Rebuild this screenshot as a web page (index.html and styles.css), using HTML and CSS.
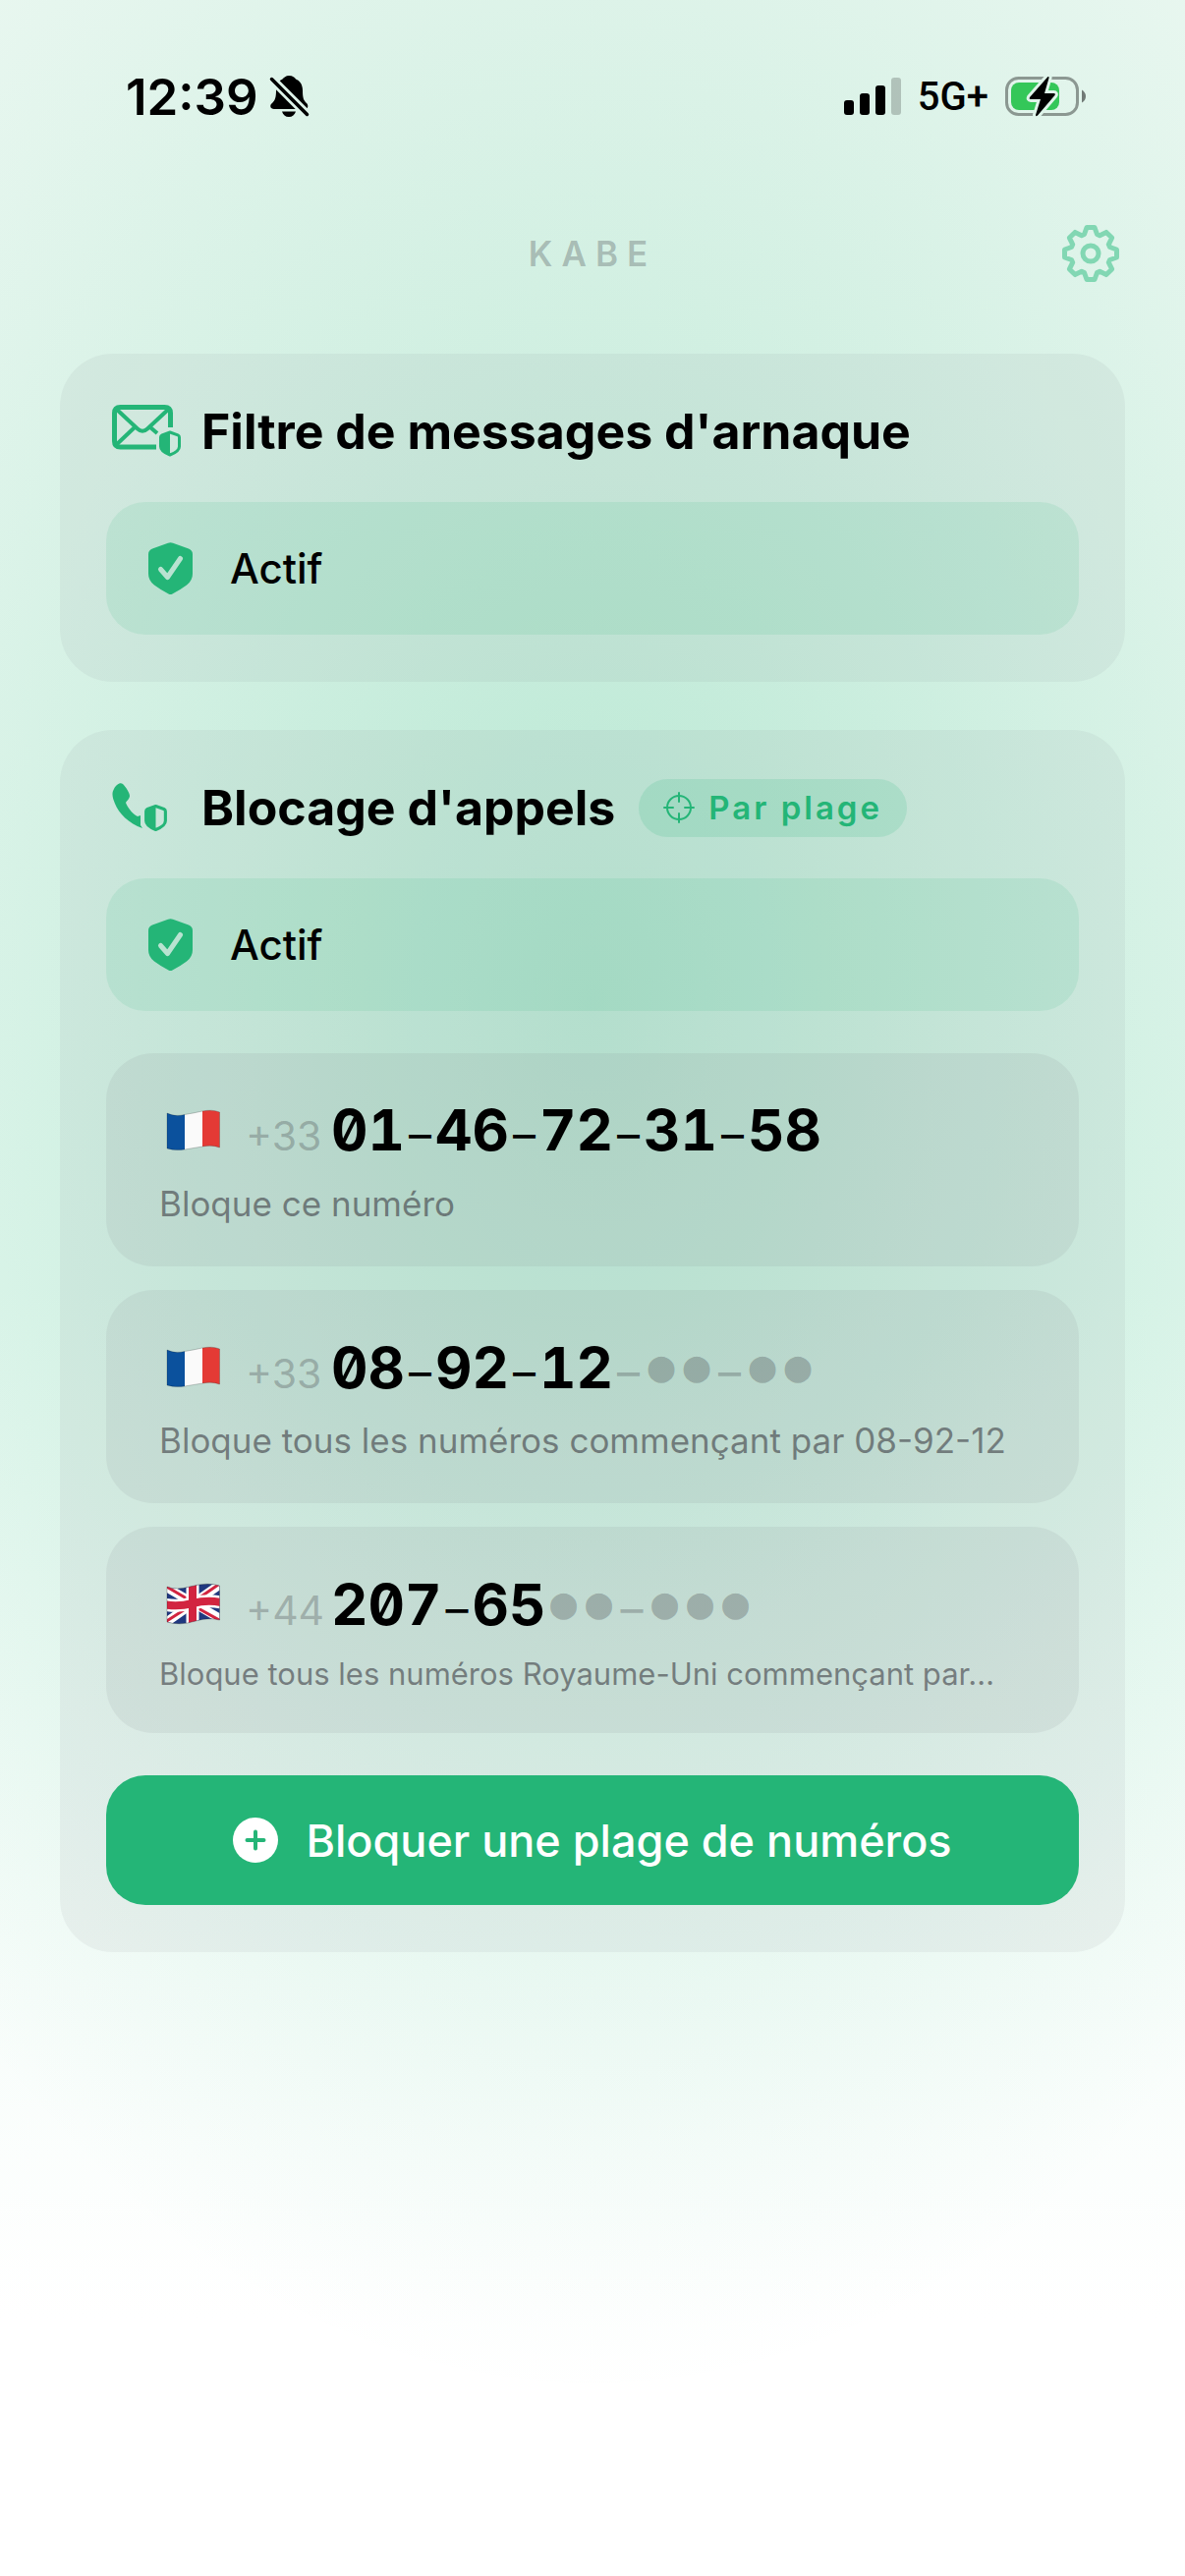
FILE: index.html
```html
<!DOCTYPE html>
<html lang="fr">
<head>
<meta charset="utf-8">
<meta name="viewport" content="width=device-width, initial-scale=1">
<title>KABE</title>
<link rel="stylesheet" href="styles.css">
</head>
<body>
<svg class="defs" width="0" height="0" aria-hidden="true">
  <symbol id="shield-check" viewBox="0 0 45 53">
    <path fill="currentColor" d="M20 .8q2.500-1.300 5 0L41 6.500Q45 8 45 12V32Q45 39 39 43.500Q33 48 24.500 52.500Q22.500 53.500 20.500 52.500Q12 48 6 43.500Q0 39 0 32V12Q0 8 4 6.500Z"/>
    <path class="cut" d="M12.500 27.500L19.500 35.500L32.500 16.500" fill="none" stroke-width="5" stroke-linecap="round" stroke-linejoin="round"/>
  </symbol>
  <symbol id="half-shield" viewBox="0 0 22 26">
    <path fill="none" stroke="currentColor" stroke-width="3" stroke-linejoin="round" d="M11 1.500L19 4.300Q20.500 5 20.500 6.500V16Q20.500 21 11 24.500Q1.500 21 1.500 16V6.500Q1.500 5 3 4.300Z"/>
    <path fill="currentColor" d="M11 1L2 4.500V17Q3 21 11 25Z"/>
  </symbol>
  <symbol id="flag-fr" viewBox="0 0 60 44">
    <path fill="#0b519d" d="M5 5Q13 9 23 6.500V42Q13 43.500 5 41Z"/>
    <path fill="#fafafa" d="M23 6.500Q32 5 41 3V39Q32 40.500 23 42Z"/>
    <path fill="#e43a35" d="M41 3Q51 1 58.500 4V40Q51 37 41 39Z"/>
    <path fill="none" stroke="#000" stroke-opacity=".2" d="M5 5Q13 9 23 6.500Q32 5 41 3Q51 1 58.500 4V40Q51 37 41 39Q32 40.500 23 42Q13 43.500 5 41Z"/>
  </symbol>
  <symbol id="flag-gb" viewBox="0 0 60 44">
    <clipPath id="gb-wave"><path d="M5 5Q14 9 28 5Q46 0 58.500 4V39Q48 36 34 40Q18 45 5 41Z"/></clipPath>
    <g clip-path="url(#gb-wave)">
      <path fill="#20387f" d="M0 0H60V44H0Z"/>
      <path stroke="#fff" stroke-width="9" d="M3 5L60 38M3 42L60 2"/>
      <path stroke="#d22440" stroke-width="3" d="M3 4L30 20M33 25L60 40M3 41L28 25M34 19L60 1"/>
      <path stroke="#fff" stroke-width="13" fill="none" d="M31 0V44M2 23Q15 26 31 22Q46 18 60 21"/>
      <path stroke="#d22440" stroke-width="8" fill="none" d="M31 0V44M2 23Q15 26 31 22Q46 18 60 21"/>
    </g>
    <path fill="none" stroke="#000" stroke-opacity=".25" d="M5 5Q14 9 28 5Q46 0 58.500 4V39Q48 36 34 40Q18 45 5 41Z"/>
  </symbol>
</svg>

<div class="statusbar">
  <div class="status-left">
    <span class="time">12:39</span>
    <svg width="42" height="44" viewBox="0 0 42 44" aria-label="Silencieux">
      <path d="M20 1C24 1 26 3 27 4.500C31 6 34 10 34 16C34 24 35 26 38 29C40 31 40 35 36 35H5C1 35 0 31 3 29C6 26 7 23 7 16C7 10 10 6 13.500 4.500C15 3 17 1 20 1ZM13 37.500H27C26 41 23.500 43 20 43S14 41 13 37.500Z"/>
      <path class="cut" d="M2 4L38 40" stroke-width="9"/>
      <path d="M2.500 4.500L38.500 40.500" stroke="#000" stroke-width="3.500" stroke-linecap="round"/>
    </svg>
  </div>
  <div class="status-right">
    <svg width="58" height="38" viewBox="0 0 58 38" aria-hidden="true">
      <rect y="23" width="10" height="15" rx="3"/><rect x="16" y="16" width="10" height="22" rx="3"/>
      <rect x="32" y="8" width="10" height="30" rx="3"/><rect x="48" width="10" height="38" rx="3" opacity=".2"/>
    </svg>
    <span class="network">5G+</span>
    <svg width="82" height="42" viewBox="0 0 82 42" aria-hidden="true">
      <rect x="1.500" y="2.500" width="72" height="37" rx="12" fill="none" stroke="#000" stroke-opacity=".38" stroke-width="3"/>
      <path d="M78 14.500Q82 17 82 21T78 27.500Z" fill-opacity=".5"/>
      <rect x="6" y="7" width="49" height="28" rx="8" fill="#34c759"/>
      <path class="cut" d="M43.500 1L25 22Q24 24 26 24H36L31 40Q31 42 33 40.500L50.500 20Q51.500 18 49.500 18H40L44.500 2.500Q45 .5 43.500 1Z" stroke-width="6" stroke-linejoin="round"/>
      <path d="M43.500 1L25 22Q24 24 26 24H36L31 40Q31 42 33 40.500L50.500 20Q51.500 18 49.500 18H40L44.500 2.500Q45 .5 43.500 1Z"/>
    </svg>
  </div>
</div>

<header class="topbar">
  <h1 class="brand">KABE</h1>
  <button class="settings" type="button" aria-label="Réglages">
    <svg width="58" height="58" viewBox="-29 -29 58 58" fill="none" stroke="currentColor" stroke-width="5" stroke-linejoin="round">
      <circle r="8"/>
      <path d="M-4-26.500H4L6.500-19.500L9.200-18.300L15.900-21.600L21.600-15.900L18.300-9.200L19.500-6.500L26.500-4V4L19.500 6.500L18.300 9.200L21.600 15.900L15.900 21.600L9.200 18.300L6.500 19.500L4 26.500H-4L-6.500 19.500L-9.200 18.300L-15.900 21.600L-21.600 15.900L-18.300 9.200L-19.500 6.500L-26.500 4V-4L-19.500-6.500L-18.300-9.200L-21.600-15.900L-15.900-21.600L-9.200-18.300L-6.500-19.500Z"/>
    </svg>
  </button>
</header>

<main class="content">
  <section class="card">
    <div class="card-head">
      <span class="card-icon">
        <svg width="72" height="54" viewBox="0 0 72 54" fill="none" stroke="currentColor" stroke-width="5" aria-hidden="true">
          <path d="M45 43H8.500Q2.500 43 2.500 37V8.500Q2.500 2.500 8.500 2.500H53.500Q59.500 2.500 59.500 8.500V23"/>
          <path d="M4 4L26 24.500Q31 29 36 24.500L58 4M4 41L23 23M39 23L46 29" stroke-width="4"/>
          <use href="#half-shield" x="48" y="26" width="22" height="27" stroke="none"/>
        </svg>
      </span>
      <h2>Filtre de messages d'arnaque</h2>
    </div>
    <div class="state">
      <svg width="45" height="53" aria-hidden="true"><use href="#shield-check"/></svg>
      <span>Actif</span>
    </div>
  </section>

  <section class="card">
    <div class="card-head">
      <span class="card-icon">
        <svg width="58" height="52" viewBox="0 0 58 52" aria-hidden="true">
          <path fill="currentColor" d="M2 7C4 3 8 0 11 2C14 5 18 11 18 14C18 17 15 19 14 21C16 27 23 34 26 35L29 34V44L31 47C17 42 7 32 3 22C1 17-1 12 2 7Z"/>
          <use href="#half-shield" x="33" y="23" width="23" height="27"/>
        </svg>
      </span>
      <h2>Blocage d'appels</h2>
      <span class="badge">
        <svg width="32" height="32" viewBox="0 0 32 32" fill="none" stroke="currentColor" stroke-width="2" stroke-linecap="round" aria-hidden="true">
          <circle cx="16" cy="16" r="12"/><path d="M16 1V10M16 22V31M1 16H10M22 16H31"/>
        </svg>
        Par plage
      </span>
    </div>
    <div class="state">
      <svg width="45" height="53" aria-hidden="true"><use href="#shield-check"/></svg>
      <span>Actif</span>
    </div>

    <ul class="numbers">
      <li class="number">
        <div class="number-line">
          <svg width="60" height="44" aria-label="France"><use href="#flag-fr"/></svg>
          <span class="prefix">+33</span>
          <span class="digits">01<i>–</i>46<i>–</i>72<i>–</i>31<i>–</i>58</span>
        </div>
        <p class="caption">Bloque ce numéro</p>
      </li>
      <li class="number">
        <div class="number-line">
          <svg width="60" height="44" aria-label="France"><use href="#flag-fr"/></svg>
          <span class="prefix">+33</span>
          <span class="digits">08<i>–</i>92<i>–</i>12<span class="masked"><i>–</i><b>●</b><b>●</b><i>–</i><b>●</b><b>●</b></span></span>
        </div>
        <p class="caption">Bloque tous les numéros commençant par 08-92-12</p>
      </li>
      <li class="number">
        <div class="number-line">
          <svg width="60" height="44" aria-label="Royaume-Uni"><use href="#flag-gb"/></svg>
          <span class="prefix">+44</span>
          <span class="digits">207<i>–</i>65<span class="masked"><b>●</b><b>●</b><i>–</i><b>●</b><b>●</b><b>●</b></span></span>
        </div>
        <p class="caption caption-small">Bloque tous les numéros Royaume-Uni commençant par…</p>
      </li>
    </ul>

    <button class="primary" type="button">
      <svg width="46" height="46" viewBox="0 0 46 46" aria-hidden="true">
        <circle cx="23" cy="23" r="23" fill="#fff"/>
        <path d="M23 14.500V31.500M14.500 23H31.500" stroke="#24b577" stroke-width="4" stroke-linecap="round"/>
      </svg>
      Bloquer une plage de numéros
    </button>
  </section>
</main>
</body>
</html>
```
FILE: styles.css
```css
:root {
  --green: #24b577;
  --page: #dff4ea;
}

* {
  box-sizing: border-box;
}

body {
  margin: 0;
  min-height: 100vh;
  font-family: Inter, "Liberation Sans", sans-serif;
  color: #000;
  background:
    radial-gradient(ellipse 78% 54% at 50% 39%, rgba(36, 181, 119, .23), rgba(36, 181, 119, .19) 20%, rgba(36, 181, 119, .1) 55%, rgba(36, 181, 119, .03) 85%, rgba(36, 181, 119, 0)),
    linear-gradient(#e9f7f0, #e6f8f0 50%, #fff 90%);
}

h1,
h2,
p,
ul {
  margin: 0;
  padding: 0;
}

svg {
  display: block;
  flex: none;
}

button {
  border: 0;
  font: inherit;
  cursor: pointer;
}

.defs {
  position: absolute;
}

.cut {
  stroke: var(--page);
}

.statusbar {
  display: flex;
  align-items: center;
  justify-content: space-between;
  height: 196px;
  padding: 0 101px 0 128px;
}

.status-left {
  display: flex;
  align-items: center;
  gap: 11px;
}

.status-right {
  display: flex;
  align-items: center;
  gap: 17px;
}

.time {
  font-size: 51px;
  font-weight: 600;
}

.network {
  font-family: Roboto, sans-serif;
  font-size: 40px;
  font-weight: 500;
}

.topbar {
  display: grid;
  grid-template-columns: 1fr auto 1fr;
  align-items: center;
  height: 124px;
  padding: 0 67px;
}

.brand {
  grid-column: 2;
  font-size: 35px;
  font-weight: 600;
  letter-spacing: 9px;
  color: rgba(60, 60, 67, .3);
}

.settings {
  justify-self: end;
  padding: 0;
  background: none;
  color: #82d7b3;
}

.content {
  display: grid;
  grid-template-columns: minmax(0, 1fr);
  gap: 49px;
  padding: 40px 61px;
}

.card {
  padding: 48px 47px;
  border-radius: 54px;
  background: rgba(120, 120, 128, .08);
}

.card-head {
  display: flex;
  align-items: center;
  height: 62px;
  margin-bottom: 41px;
  padding-left: 6px;
}

.card-icon {
  width: 91px;
  color: var(--green);
}

h2 {
  font-size: 50px;
  line-height: 62px;
  font-weight: 700;
  white-space: nowrap;
}

.badge {
  display: flex;
  align-items: center;
  gap: 14px;
  height: 59px;
  margin-left: 24px;
  padding: 0 25px;
  border-radius: 30px;
  background: rgba(36, 181, 119, .15);
  color: var(--green);
  font-size: 33px;
  font-weight: 600;
  letter-spacing: 3px;
  white-space: nowrap;
}

.state {
  --page: #b9e3d1;
  display: flex;
  align-items: center;
  gap: 38px;
  height: 135px;
  padding: 0 43px;
  border-radius: 40px;
  background: rgba(36, 181, 119, .11);
  font-size: 42px;
  font-weight: 500;
}

.state svg {
  color: var(--green);
}

.numbers {
  display: grid;
  grid-template-columns: minmax(0, 1fr);
  gap: 24px;
  margin: 43px 0;
  list-style: none;
}

.number {
  padding: 48px 54px 41px;
  border-radius: 48px;
  background: rgba(120, 120, 128, .1);
}

.number-line {
  display: flex;
  align-items: baseline;
  height: 60px;
  margin-bottom: 23px;
  padding-left: 3px;
  line-height: 60px;
  white-space: nowrap;
}

.number-line svg {
  align-self: center;
}

.prefix {
  width: 87px;
  margin-left: 25px;
  font-size: 41px;
  color: rgba(60, 60, 67, .3);
}

.digits {
  font-size: 58px;
  font-weight: 700;
  font-feature-settings: "tnum", "zero";
}

.digits i,
.digits b {
  display: inline-block;
  font-style: normal;
  font-weight: 400;
  text-align: center;
}

.digits i {
  width: 31px;
  font-size: 46px;
}

.digits b {
  width: 36px;
  font-family: "DejaVu Sans Mono", monospace;
  font-size: 45px;
  vertical-align: 7px;
}

.masked {
  color: rgba(60, 60, 67, .3);
}

.caption {
  font-size: 35px;
  line-height: 45px;
  color: rgba(60, 60, 67, .6);
  white-space: nowrap;
}

.caption-small {
  font-size: 31px;
  line-height: 38px;
}

.primary {
  display: flex;
  align-items: center;
  justify-content: center;
  gap: 28px;
  width: 100%;
  height: 132px;
  border-radius: 40px;
  background: var(--green);
  color: #fff;
  font-size: 45px;
  font-weight: 500;
}
```
